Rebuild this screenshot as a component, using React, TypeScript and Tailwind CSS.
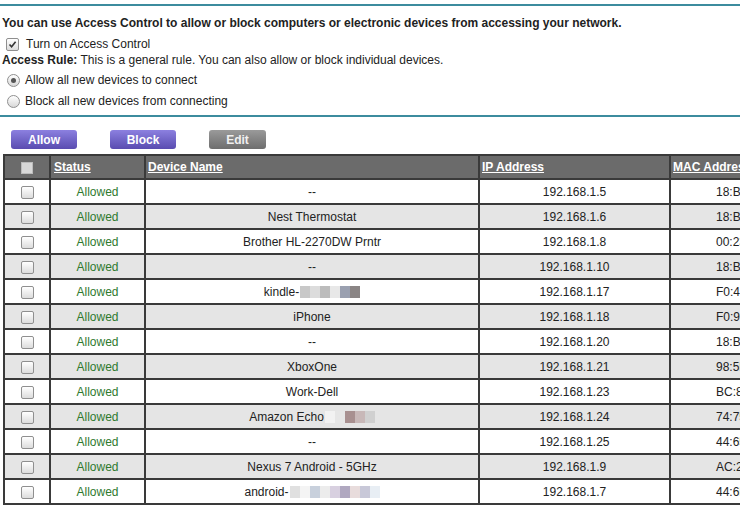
import React from "react";

type Device = {
  name: string;
  blur?: string[];
  ip: string;
  mac: string;
};

const devices: Device[] = [
  { name: "--", ip: "192.168.1.5", mac: "18:B4" },
  { name: "Nest Thermostat", ip: "192.168.1.6", mac: "18:B4" },
  { name: "Brother HL-2270DW Prntr", ip: "192.168.1.8", mac: "00:23" },
  { name: "--", ip: "192.168.1.10", mac: "18:B4" },
  { name: "kindle-", blur: ["#c8c8c8", "#dcdcdc", "#bcbcbc", "#e8e8e8", "#9aa0b0", "#8a8585"], ip: "192.168.1.17", mac: "F0:4D" },
  { name: "iPhone", ip: "192.168.1.18", mac: "F0:99" },
  { name: "--", ip: "192.168.1.20", mac: "18:B4" },
  { name: "XboxOne", ip: "192.168.1.21", mac: "98:5F" },
  { name: "Work-Dell", ip: "192.168.1.23", mac: "BC:85" },
  { name: "Amazon Echo", blur: ["#f2f2f2", "#e6e6e6", "#a89090", "#c8b8b8", "#d0d0d0"], ip: "192.168.1.24", mac: "74:75" },
  { name: "--", ip: "192.168.1.25", mac: "44:65" },
  { name: "Nexus 7 Android - 5GHz", ip: "192.168.1.9", mac: "AC:22" },
  { name: "android-", blur: ["#e0e0e0", "#f4f4f4", "#c8d0dc", "#ececec", "#d8d0e0", "#b0a8c0", "#e8dcdc", "#c8c8d8", "#e8eef4"], ip: "192.168.1.7", mac: "44:6D" },
];

const Check = ({ checked }: { checked?: boolean }) => (
  <span className="inline-flex h-[13px] w-[13px] items-center justify-center rounded-[2px] border border-[#8f8f8f] bg-gradient-to-b from-[#ffffff] to-[#dcdcdc] align-middle">
    {checked && (
      <svg width="9" height="9" viewBox="0 0 9 9">
        <path d="M1.5 4.5 L3.6 6.8 L7.6 1.8" fill="none" stroke="#333" strokeWidth="1.6" />
      </svg>
    )}
  </span>
);

const Radio = ({ checked }: { checked?: boolean }) => (
  <span className="inline-flex h-[13px] w-[13px] items-center justify-center rounded-full border border-[#8f8f8f] bg-gradient-to-b from-[#ffffff] to-[#d8d8d8] align-middle">
    {checked && <span className="h-[5px] w-[5px] rounded-full bg-[#555]" />}
  </span>
);

export default function App() {
  return (
    <div className="h-[520px] w-[740px] overflow-hidden bg-white text-[12px] text-[#222] [font-family:'Liberation_Sans',Arial,sans-serif]">
      <div className="pt-[4px]">
        <div className="h-[2px] bg-[#3c8c9e]" />
      </div>
      <div className="pl-[2px] pt-[10px] font-bold leading-[15px]">
        You can use Access Control to allow or block computers or electronic devices from accessing your network.
      </div>
      <label className="mt-[4px] flex h-[18px] items-center pl-[6px]">
        <Check checked />
        <span className="ml-[7px]">Turn on Access Control</span>
      </label>
      <div className="pl-[2px] leading-[15px]">
        <b>Access Rule:</b> This is a general rule. You can also allow or block individual devices.
      </div>
      <label className="mt-[3px] flex h-[18px] items-center pl-[7px]">
        <Radio checked />
        <span className="ml-[5px]">Allow all new devices to connect</span>
      </label>
      <label className="mt-[3px] flex h-[18px] items-center pl-[7px]">
        <Radio />
        <span className="ml-[5px]">Block all new devices from connecting</span>
      </label>
      <div className="mt-[5px] h-[2px] bg-[#3c8c9e]" />

      <div className="mt-[13px] flex h-[19px] items-stretch pl-[11px]">
        <button className="w-[66px] rounded-[3px] bg-gradient-to-b from-[#8c80e0] to-[#5a4cb0] text-[12px] font-bold text-white">
          Allow
        </button>
        <button className="ml-[33px] w-[66px] rounded-[3px] bg-gradient-to-b from-[#8c80e0] to-[#5a4cb0] text-[12px] font-bold text-white">
          Block
        </button>
        <button className="ml-[33px] w-[57px] rounded-[3px] bg-gradient-to-b from-[#9a9a9a] to-[#6e6e6e] text-[12px] font-bold text-[#f0f0f0]">
          Edit
        </button>
      </div>

      <div className="mt-[5px] pl-[3px]">
        <table className="w-[820px] table-fixed border-collapse border-2 border-[#3a3a3a]">
          <colgroup>
            <col className="w-[46px]" />
            <col className="w-[95px]" />
            <col className="w-[334px]" />
            <col className="w-[191px]" />
            <col />
          </colgroup>
          <thead>
            <tr className="h-[24px] bg-[#6b6b6b] text-left font-bold text-white">
              <th className="border-2 border-[#3a3a3a] text-center">
                <span className="inline-block h-[12px] w-[12px] border border-[#bbb] bg-[#d8d8d8] align-middle" />
              </th>
              <th className="border-2 border-[#3a3a3a] pl-[3px] underline">Status</th>
              <th className="border-2 border-[#3a3a3a] pl-[2px] underline">Device Name</th>
              <th className="border-2 border-[#3a3a3a] pl-[2px] underline">IP Address</th>
              <th className="whitespace-nowrap border-2 border-[#3a3a3a] pl-[2px] underline">MAC Address</th>
            </tr>
          </thead>
          <tbody>
            {devices.map((d, i) => (
              <tr key={i} className={`h-[25px] ${i % 2 === 0 ? "bg-white" : "bg-[#e5e5e5]"}`}>
                <td className="border-2 border-[#3a3a3a] text-center">
                  <Check />
                </td>
                <td className="border-2 border-[#3a3a3a] text-center text-[#2f7a2f]">Allowed</td>
                <td className="border-2 border-[#3a3a3a] text-center">
                  <span className="inline-flex items-center">
                    {d.name}
                    {d.blur && (
                      <span className="ml-[1px] inline-flex h-[12px]">
                        {d.blur.map((c, j) => (
                          <span key={j} className="h-full w-[10px]" style={{ backgroundColor: c }} />
                        ))}
                      </span>
                    )}
                  </span>
                </td>
                <td className="border-2 border-[#3a3a3a] text-center">{d.ip}</td>
                <td className="border-2 border-[#3a3a3a] pl-[45px]">{d.mac}</td>
              </tr>
            ))}
          </tbody>
        </table>
      </div>
    </div>
  );
}
